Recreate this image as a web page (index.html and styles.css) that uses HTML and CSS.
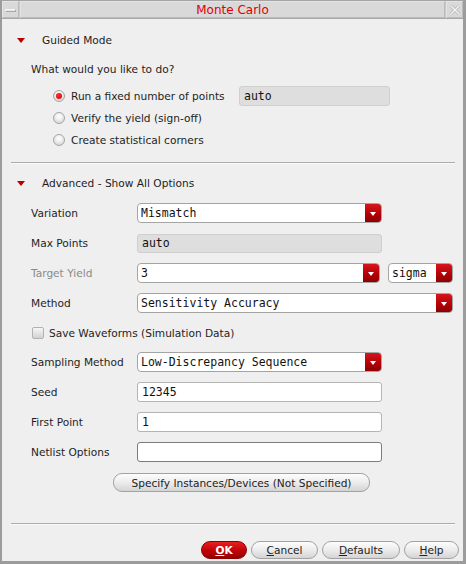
FILE: index.html
```html
<!DOCTYPE html>
<html>
<head>
<meta charset="utf-8">
<title>Monte Carlo</title>
<link rel="stylesheet" href="styles.css">
</head>
<body>
<div class="window">
  <div class="titlebar">
    <div class="tb-box tb-min"><span class="min-glyph"></span></div>
    <div class="tb-box tb-title">Monte Carlo</div>
    <div class="tb-box tb-close">
      <svg width="12" height="12" viewBox="0 0 12 12"><path d="M2 2 L10 10 M10 2 L2 10" stroke="#b8b8b8" stroke-width="3" fill="none"/><path d="M2 2 L10 10 M10 2 L2 10" stroke="#f4f4f4" stroke-width="1.4" fill="none"/></svg>
    </div>
  </div>
  <div class="content">
    <div class="sec-head head-guided"><span class="tri"></span><span>Guided Mode</span></div>
    <div class="question">What would you like to do?</div>
    <div class="radios">
      <div class="radio-row"><span class="radio on"></span><span class="rlabel fixed">Run a fixed number of points</span><span class="fld ro auto-fld">auto</span></div>
      <div class="radio-row"><span class="radio"></span><span class="rlabel">Verify the yield (sign-off)</span></div>
      <div class="radio-row"><span class="radio"></span><span class="rlabel">Create statistical corners</span></div>
    </div>
    <div class="sep sep-top"></div>
    <div class="sec-head head-adv"><span class="tri"></span><span>Advanced - Show All Options</span></div>
    <div class="form">
      <div class="row"><span class="lbl">Variation</span><div class="dd w-245"><span class="val">Mismatch</span><span class="arrow"></span></div></div>
      <div class="row"><span class="lbl">Max Points</span><span class="fld ro w-245 short">auto</span></div>
      <div class="row"><span class="lbl dim">Target Yield</span><div class="dd w-243"><span class="val">3</span><span class="arrow"></span></div><div class="dd w-65 sigma"><span class="val">sigma</span><span class="arrow"></span></div></div>
      <div class="row"><span class="lbl">Method</span><div class="dd w-316"><span class="val">Sensitivity Accuracy</span><span class="arrow"></span></div></div>
      <div class="row check-row"><span class="check"></span><span>Save Waveforms (Simulation Data)</span></div>
      <div class="row after-check"><span class="lbl">Sampling Method</span><div class="dd w-245"><span class="val">Low-Discrepancy Sequence</span><span class="arrow"></span></div></div>
      <div class="row"><span class="lbl">Seed</span><span class="fld w-245">12345</span></div>
      <div class="row"><span class="lbl">First Point</span><span class="fld w-245">1</span></div>
      <div class="row"><span class="lbl">Netlist Options</span><span class="fld w-245 dark"></span></div>
    </div>
    <div class="specify-row"><span class="pill specify">Specify Instances/Devices (Not Specified)</span></div>
    <div class="sep sep-bottom"></div>
    <div class="actions">
      <span class="pill ok"><u>O</u>K</span>
      <span class="pill cancel"><u>C</u>ancel</span>
      <span class="pill defaults"><u>D</u>efaults</span>
      <span class="pill help"><u>H</u>elp</span>
    </div>
  </div>
</div>
</body>
</html>
```
FILE: styles.css
```css
* { box-sizing: border-box; }
html, body { margin: 0; padding: 0; background: #efefef; }
body { font-family: "DejaVu Sans", "Noto Sans", sans-serif; font-size: 10.6px; color: #1e1e1e; }

.window {
  width: 466px;
  height: 564px;
  background: #efefef;
  border-top: 1px solid #a4a4a4;
  border-left: 2px solid #9c9c9c;
  border-right: 3px solid #9c9c9c;
  border-bottom: 3px solid #9c9c9c;
  display: flex;
  flex-direction: column;
}

/* title bar */
.titlebar {
  display: flex;
  height: 18px;
  gap: 1px;
  background: #c8c8c8;
  border-bottom: 1px solid #a8a8a8;
}
.tb-box {
  background: #d9d9d9;
  border: 1px solid #e4e4e4;
  border-right-color: #bcbcbc;
  border-bottom-color: #bcbcbc;
  display: flex;
  align-items: center;
  justify-content: center;
}
.tb-min { width: 17px; }
.tb-close { width: 17px; }
.tb-title {
  flex: 1;
  color: #e00000;
  font-size: 12px;
  line-height: 16px;
}
.min-glyph {
  width: 11px;
  height: 3px;
  margin-top: 2px;
  background: #e8e8e8;
  border: 1px solid #a8a8a8;
  border-top-color: #f4f4f4;
  border-left-color: #f4f4f4;
}

/* sections */
.sec-head {
  height: 20px;
  display: flex;
  align-items: center;
  padding-left: 15px;
}
.tri {
  width: 0;
  height: 0;
  border-left: 4px solid transparent;
  border-right: 4px solid transparent;
  border-top: 5px solid #b80000;
  margin-right: 17px;
}
.head-guided { margin-top: 11px; }
.question {
  margin-top: 9px;
  height: 20px;
  line-height: 20px;
  padding-left: 29px;
}
.radios {
  margin-top: 7px;
  display: flex;
  flex-direction: column;
  gap: 2px;
  padding-left: 51px;
}
.radio-row {
  display: flex;
  align-items: center;
  height: 20px;
}
.radio {
  width: 12px;
  height: 12px;
  border-radius: 50%;
  border: 1px solid #a6a6a6;
  background: radial-gradient(circle at 50% 35%, #ffffff 0%, #ececec 45%, #c8c8c8 100%);
  margin-right: 6px;
  display: flex;
  align-items: center;
  justify-content: center;
}
.radio.on::after {
  content: "";
  width: 6px;
  height: 6px;
  border-radius: 50%;
  background: radial-gradient(circle at 40% 35%, #ff3030, #c00000);
}
.rlabel.fixed { width: 168px; }

.fld {
  height: 20px;
  border: 1px solid #b4b4b4;
  border-radius: 3px;
  background: #fff;
  font-family: "DejaVu Sans Mono", "Liberation Mono", monospace;
  font-size: 11.5px;
  line-height: 18px;
  padding-left: 4px;
  color: #111;
}
.fld.ro { background: #dedede; border-color: #cfcfcf; }
.fld.dark { border-color: #7c7c7c; }
.fld.short { height: 19px; line-height: 17px; }
.auto-fld { width: 151px; }

.sep {
  height: 2px;
  border-top: 1px solid #ababab;
  border-bottom: 1px solid #fafafa;
  margin-left: 9px;
  width: 444px;
}
.sep-top { margin-top: 12px; }
.head-adv { margin-top: 9px; }

/* form */
.form {
  margin-top: 10px;
  padding-left: 29px;
  display: flex;
  flex-direction: column;
  gap: 10px;
}
.row {
  display: flex;
  align-items: center;
  height: 20px;
}
.lbl { width: 106px; flex: none; }
.lbl.dim { color: #8a8a8a; }
.w-245 { width: 245px; }
.w-243 { width: 243px; }
.w-65 { width: 65px; }
.w-316 { width: 316px; }
.sigma { margin-left: 8px; }

.dd {
  display: flex;
  height: 20px;
  border: 1px solid #a4a4a4;
  border-radius: 4px;
  background: #fff;
  overflow: hidden;
}
.dd .val {
  flex: 1;
  padding-left: 3px;
  font-family: "DejaVu Sans Mono", "Liberation Mono", monospace;
  font-size: 11.5px;
  line-height: 18px;
  color: #111;
  white-space: nowrap;
  overflow: hidden;
}
.dd .arrow {
  width: 16px;
  flex: none;
  background: linear-gradient(#d6161c, #b00006 60%, #8e0000);
  display: flex;
  align-items: center;
  justify-content: center;
}
.dd .arrow::after {
  content: "";
  width: 0;
  height: 0;
  border-left: 3.5px solid transparent;
  border-right: 3.5px solid transparent;
  border-top: 4px solid #ffffff;
  margin-top: 1px;
}

.check-row { padding-left: 1px; }
.check {
  width: 12px;
  height: 12px;
  border: 1px solid #b2b2b2;
  border-radius: 2px;
  background: linear-gradient(#f6f6f6, #d2d2d2);
  margin-right: 5px;
}
.after-check { margin-top: -1px; }

/* buttons */
.pill {
  display: inline-flex;
  align-items: center;
  justify-content: center;
  height: 18px;
  border: 1px solid #a2a2a2;
  border-radius: 9px;
  background: linear-gradient(#fdfdfd, #ececec 50%, #d4d4d4);
  color: #222;
  font-size: 10.6px;
}
.pill u { text-decoration: underline; }
.specify-row {
  margin-top: 11px;
  padding-left: 111px;
  display: flex;
}
.specify { width: 257px; height: 19px; }
.sep-bottom { margin-top: 31px; }
.actions {
  margin-top: 16px;
  display: flex;
  justify-content: flex-end;
  gap: 4px;
  padding-right: 4px;
}
.ok {
  width: 46px;
  background: linear-gradient(#e82020, #c00008 55%, #960000);
  border-color: #880000;
  color: #fff;
  font-weight: bold;
}
.cancel { width: 67px; }
.defaults { width: 78px; }
.help { width: 55px; }
```
